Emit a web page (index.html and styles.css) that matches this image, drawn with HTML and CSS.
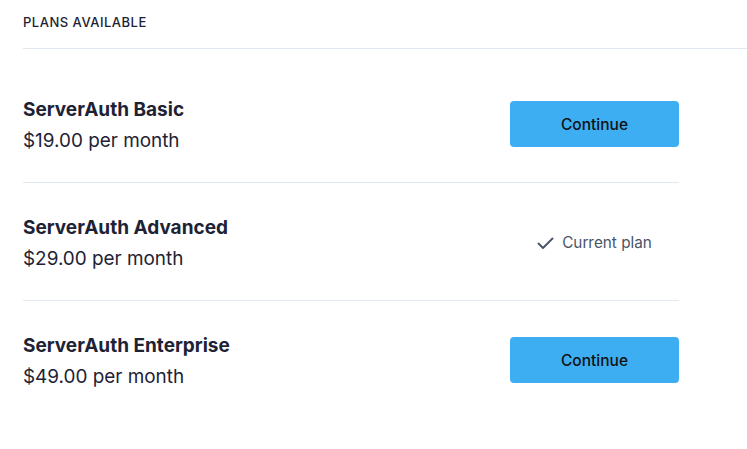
FILE: index.html
```html
<!DOCTYPE html>
<html>
<head>
<meta charset="utf-8">
<link rel="stylesheet" href="styles.css">
</head>
<body>
<div class="page">
  <div class="header">Plans Available</div>
  <div class="plans">
    <div class="plan">
      <div class="info">
        <div class="name">ServerAuth Basic</div>
        <div class="price">$19.00 per month</div>
      </div>
      <button class="btn">Continue</button>
    </div>
    <div class="plan">
      <div class="info">
        <div class="name">ServerAuth Advanced</div>
        <div class="price">$29.00 per month</div>
      </div>
      <div class="current">
        <svg width="17" height="16" viewBox="0 0 17 16" fill="none"><path d="M1.5 8.5l4.5 4.5 9.5-9.5" stroke="#4a5568" stroke-width="1.9" stroke-linecap="round" stroke-linejoin="round"/></svg>
        <span>Current plan</span>
      </div>
    </div>
    <div class="plan last">
      <div class="info">
        <div class="name">ServerAuth Enterprise</div>
        <div class="price">$49.00 per month</div>
      </div>
      <button class="btn">Continue</button>
    </div>
  </div>
</div>
</body>
</html>
```
FILE: styles.css
```css
html, body { margin: 0; padding: 0; background: #fff; }
body { font-family: Inter, "Noto Sans", sans-serif; color: #1e2235; }
.page { padding-left: 23px; }
.header {
  text-transform: uppercase;
  font-size: 13px;
  line-height: 18px;
  letter-spacing: 0.5px;
  font-weight: 500;
  color: #1e2235;
  padding: 13px 0 17px;
  border-bottom: 1px solid #e2e8f0;
}
.plans { margin-top: 16px; width: 656px; }
.plan {
  display: flex;
  align-items: center;
  justify-content: space-between;
  padding: 28px 0 26px;
  border-bottom: 1px solid #e2e8f0;
}
.plan.last { border-bottom: none; }
.info { padding-top: 1px; }
.name { font-size: 19px; line-height: 31px; font-weight: 700; color: #1e2235; }
.price { font-size: 18.9px; line-height: 31px; color: #1e2235; }
.btn {
  width: 169px;
  height: 46px;
  margin-bottom: 1px;
  border: none;
  border-radius: 4px;
  background: #3daef2;
  color: #111;
  font-family: Inter, "Noto Sans", sans-serif;
  font-size: 15.5px;
  font-weight: 500;
  padding: 0;
}
.current {
  width: 169px;
  display: flex;
  align-items: center;
  justify-content: center;
  gap: 8px;
  font-size: 15.3px;
  color: #4a5568;
}
```
